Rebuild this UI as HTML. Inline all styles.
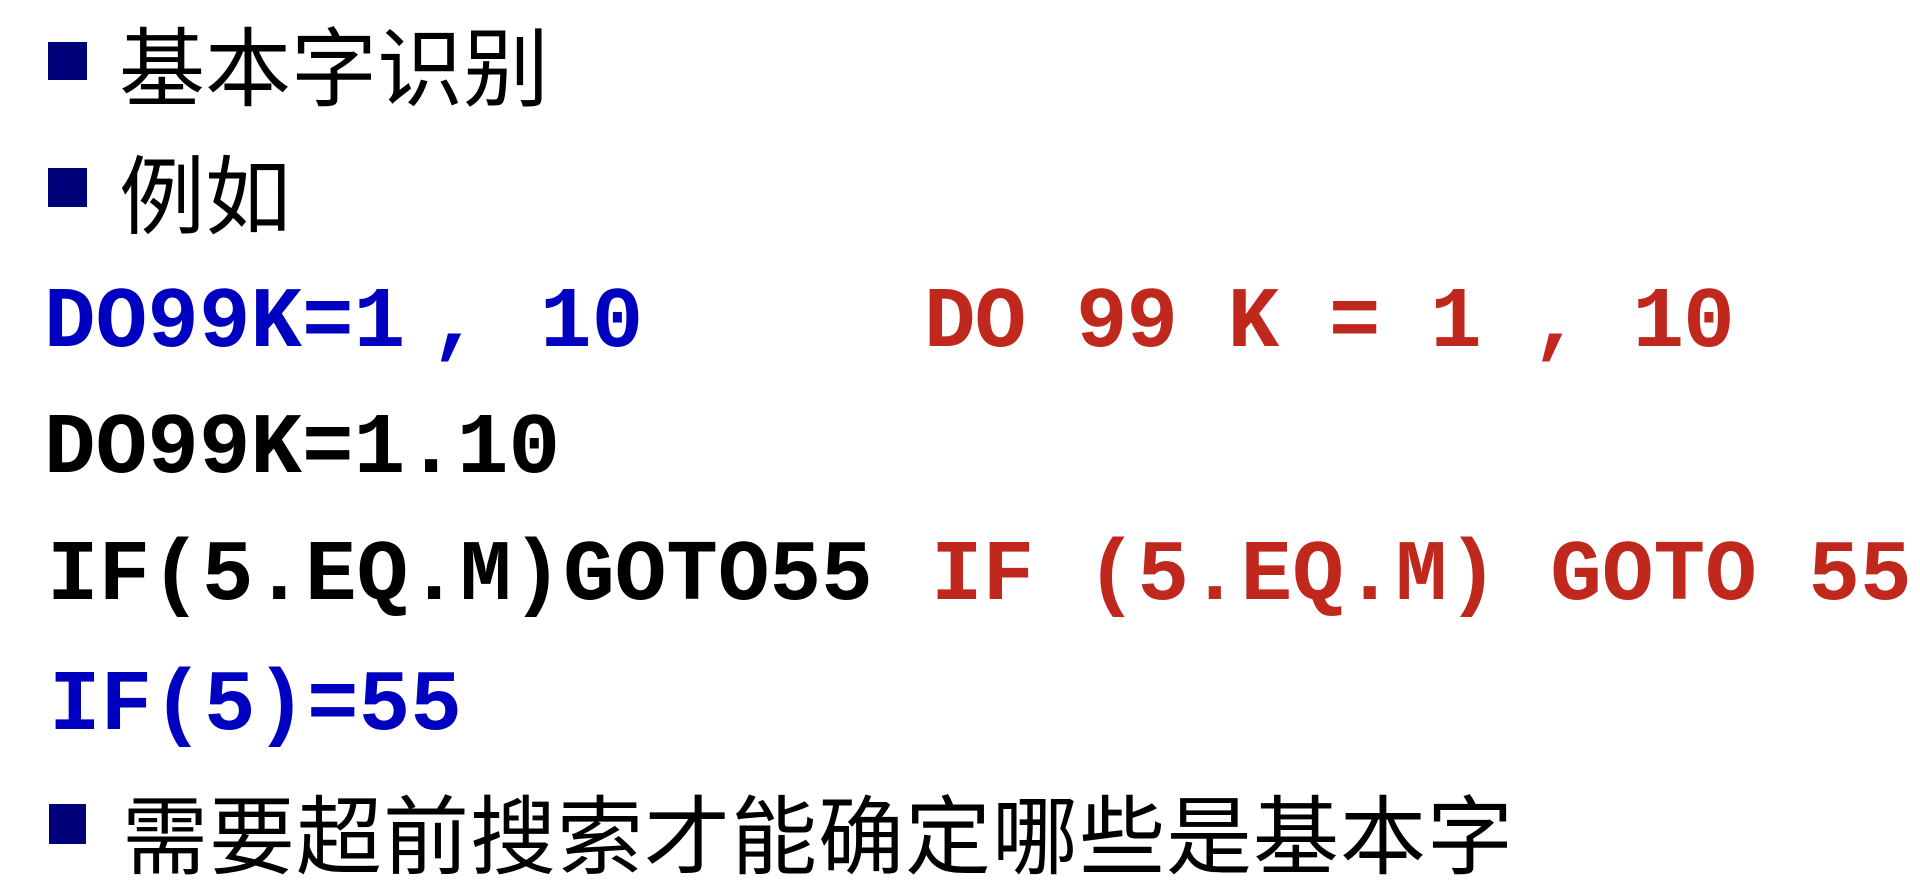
<!DOCTYPE html>
<html><head><meta charset="utf-8"><style>
html,body{margin:0;padding:0;background:#fff;width:1920px;height:892px;overflow:hidden;position:relative}
.b{position:absolute;background:#000078}
.cj{position:absolute;font-family:"Liberation Sans","Noto Sans CJK SC",sans-serif;font-size:86px;line-height:86px;color:#000;white-space:nowrap}
.m{position:absolute;font-family:"Liberation Mono","Courier New",monospace;font-weight:bold;font-size:86px;line-height:86px;white-space:pre}
.bl{color:#0000c0}.rd{color:#c0281e}.bk{color:#000}
</style></head><body>
<div class="b" style="left:48px;top:42px;width:39px;height:38px"></div>
<div class="cj" style="left:119px;top:27px">基本字识别</div>
<div class="b" style="left:48px;top:168px;width:39px;height:39px"></div>
<div class="cj" style="left:119px;top:155px">例如</div>
<div class="m bl" style="left:44px;top:280px">DO99K=1</div>
<div class="m bl" style="left:430px;top:280px">,</div>
<div class="m bl" style="left:540px;top:280px">10</div>
<div class="m rd" style="left:924px;top:280px;letter-spacing:-1px">DO 99 K = 1 , 10</div>
<div class="m bk" style="left:44px;top:406px">DO99K=1.10</div>
<div class="m bk" style="left:47px;top:533px">IF(5.EQ.M)GOTO55</div>
<div class="m rd" style="left:931px;top:533px">IF (5.EQ.M) GOTO 55</div>
<div class="m bl" style="left:49px;top:663px">IF(5)=55</div>
<div class="b" style="left:49px;top:804px;width:37px;height:40px"></div>
<div class="cj" style="left:122px;top:795px;letter-spacing:1px">需要超前搜索才能确定哪些是基本字</div>
</body></html>
